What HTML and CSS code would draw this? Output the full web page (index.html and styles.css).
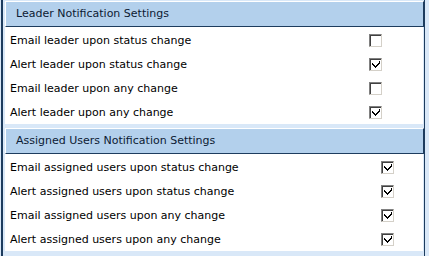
FILE: index.html
```html
<!DOCTYPE html>
<html lang="en">
<head>
    <meta charset="UTF-8">
    <title>Notification Settings</title>
    <link rel="stylesheet" href="styles.css">
</head>
<body>
    <div class="frame">
        <div class="section">
            <div class="section-header">Leader Notification Settings</div>
            <div class="rows leader">
                <div class="row"><span class="label">Email leader upon status change</span><span class="check"></span></div>
                <div class="row"><span class="label">Alert leader upon status change</span><span class="check"><svg width="13" height="13" viewBox="0 0 13 13"><path d="M3 5h1v1h1v1h1v1h1v-1h1v-1h1v-1h1v-2h1v3h-1v1h-1v1h-1v1h-1v1h-1v-1h-1v-1h-1v-1h-1z" fill="#000" shape-rendering="crispEdges"/></svg></span></div>
                <div class="row"><span class="label">Email leader upon any change</span><span class="check"></span></div>
                <div class="row"><span class="label">Alert leader upon any change</span><span class="check"><svg width="13" height="13" viewBox="0 0 13 13"><path d="M3 5h1v1h1v1h1v1h1v-1h1v-1h1v-1h1v-2h1v3h-1v1h-1v1h-1v1h-1v1h-1v-1h-1v-1h-1v-1h-1z" fill="#000" shape-rendering="crispEdges"/></svg></span></div>
            </div>
        </div>
        <div class="section">
            <div class="section-header">Assigned Users Notification Settings</div>
            <div class="rows assigned">
                <div class="row"><span class="label">Email assigned users upon status change</span><span class="check"><svg width="13" height="13" viewBox="0 0 13 13"><path d="M3 5h1v1h1v1h1v1h1v-1h1v-1h1v-1h1v-2h1v3h-1v1h-1v1h-1v1h-1v1h-1v-1h-1v-1h-1v-1h-1z" fill="#000" shape-rendering="crispEdges"/></svg></span></div>
                <div class="row"><span class="label">Alert assigned users upon status change</span><span class="check"><svg width="13" height="13" viewBox="0 0 13 13"><path d="M3 5h1v1h1v1h1v1h1v-1h1v-1h1v-1h1v-2h1v3h-1v1h-1v1h-1v1h-1v1h-1v-1h-1v-1h-1v-1h-1z" fill="#000" shape-rendering="crispEdges"/></svg></span></div>
                <div class="row"><span class="label">Email assigned users upon any change</span><span class="check"><svg width="13" height="13" viewBox="0 0 13 13"><path d="M3 5h1v1h1v1h1v1h1v-1h1v-1h1v-1h1v-2h1v3h-1v1h-1v1h-1v1h-1v1h-1v-1h-1v-1h-1v-1h-1z" fill="#000" shape-rendering="crispEdges"/></svg></span></div>
                <div class="row"><span class="label">Alert assigned users upon any change</span><span class="check"><svg width="13" height="13" viewBox="0 0 13 13"><path d="M3 5h1v1h1v1h1v1h1v-1h1v-1h1v-1h1v-2h1v3h-1v1h-1v1h-1v1h-1v1h-1v-1h-1v-1h-1v-1h-1z" fill="#000" shape-rendering="crispEdges"/></svg></span></div>
            </div>
        </div>
    </div>
</body>
</html>
```

FILE: styles.css
```css
body {
    margin: 0;
    background: #d9e8f8;
    font-family: "DejaVu Sans", Verdana, sans-serif;
    font-size: 11px;
    color: #000;
}
.frame {
    width: 424px;
    height: 256px;
    box-sizing: border-box;
    border-left: 2px solid #1d3c5e;
    border-right: 1px solid #1d3c5e;
    margin-left: 1px;
    padding: 1px 0 0 2px;
    background: #d9e8f8;
}
.section {
    margin-bottom: 4px;
}
.section-header {
    height: 24px;
    line-height: 24px;
    background: #b3d0ec;
    border-top: 1px solid #fff;
    border-left: 1px solid #fff;
    border-right: 1px solid #1d3c5e;
    border-bottom: 1px solid #1d3c5e;
    padding-left: 10px;
    color: #0c1a33;
}
.rows {
    background: #fff;
    margin-right: 1px;
    padding-top: 1px;
}
.row {
    height: 24px;
    display: grid;
    align-items: center;
    padding-left: 5px;
}
.leader .row {
    grid-template-columns: 359px 13px;
}
.assigned .row {
    grid-template-columns: 371px 13px;
}
.check {
    width: 13px;
    height: 13px;
    box-sizing: border-box;
    border-top: 1px solid #808080;
    border-left: 1px solid #808080;
    border-right: 1px solid #d4d0c8;
    border-bottom: 1px solid #d4d0c8;
    box-shadow: inset 1px 1px 0 #404040;
    background: #fff;
    position: relative;
}
.check svg {
    position: absolute;
    left: -1px;
    top: -1px;
}
```
